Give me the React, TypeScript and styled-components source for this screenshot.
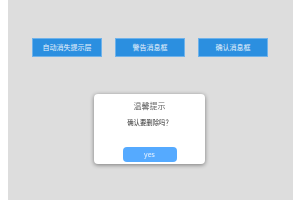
import React from "react"
import styled, { createGlobalStyle } from "styled-components"

const GlobalStyle = createGlobalStyle`
  html, body {
    margin: 0;
    padding: 0;
    background: #ffffff;
  }
  body {
    font-family: "Noto Sans CJK SC", "Noto Sans", sans-serif;
  }
`

const App = () => {
  return (
    <>
      <GlobalStyle />
      <Page>
        <ButtonRow>
          <ActionButton>自动消失提示层</ActionButton>
          <ActionButton>警告消息框</ActionButton>
          <ActionButton>确认消息框</ActionButton>
        </ButtonRow>
      </Page>
      <Dialog>
        <DialogTitle>温馨提示</DialogTitle>
        <DialogMessage>确认要删除吗？</DialogMessage>
        <ConfirmButton>yes</ConfirmButton>
      </Dialog>
    </>
  )
}

export default App

const Page = styled.div`
  width: 95%;
  height: 100vh;
  margin: 0 auto;
  background: #dddddd;
  padding-top: 38px;
  box-sizing: border-box;
`

const ButtonRow = styled.div`
  display: flex;
  justify-content: center;
  gap: 13px;
`

const ActionButton = styled.button`
  width: 70px;
  height: 19px;
  padding: 0;
  background: #2b8fe0;
  border: 1px solid #6fb2ea;
  color: #e8f2fb;
  font-family: "Noto Sans CJK SC", sans-serif;
  font-size: 7px;
  line-height: 17px;
  cursor: pointer;
`

const Dialog = styled.div`
  position: fixed;
  left: 94px;
  top: 94px;
  width: 111px;
  height: 70px;
  box-sizing: border-box;
  background: #ffffff;
  border-radius: 4px;
  box-shadow: 0 1px 4px rgba(0, 0, 0, 0.45);
  display: flex;
  flex-direction: column;
  align-items: center;
  padding-top: 6px;
`

const DialogTitle = styled.div`
  font-size: 8px;
  line-height: 12px;
  color: #666666;
`

const DialogMessage = styled.div`
  margin-top: 5px;
  font-size: 6.4px;
  line-height: 11px;
  color: #333333;
`

const ConfirmButton = styled.button`
  margin-top: 19px;
  width: 54px;
  height: 15px;
  padding: 0;
  border: none;
  border-radius: 4px;
  background: #55aaff;
  color: #e6f2ff;
  font-family: "Noto Sans", sans-serif;
  font-size: 7px;
  line-height: 15px;
`
